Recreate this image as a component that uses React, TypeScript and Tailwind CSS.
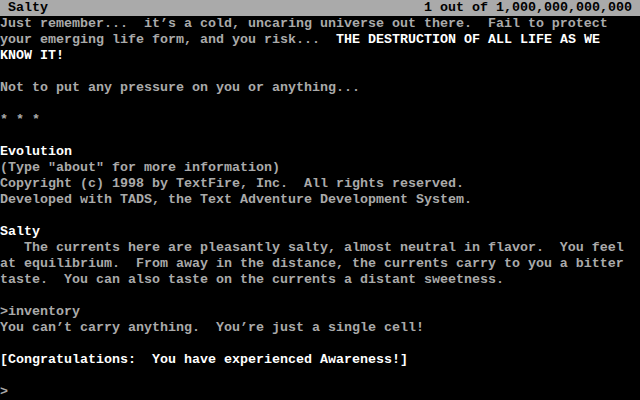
import React from "react";

type Seg = { t: string; w?: boolean };
const L = (...s: (string | Seg)[]) => s.map((x) => (typeof x === "string" ? { t: x } : x));

const lines: Seg[][] = [
  L("Just remember...  it\u2019s a cold, uncaring universe out there.  Fail to protect"),
  L("your emerging life form, and you risk...  ", { t: "THE DESTRUCTION OF ALL LIFE AS WE", w: true }),
  L({ t: "KNOW IT!", w: true }),
  L(""),
  L("Not to put any pressure on you or anything..."),
  L(""),
  L("* * *"),
  L(""),
  L({ t: "Evolution", w: true }),
  L("(Type \"about\" for more information)"),
  L("Copyright (c) 1998 by TextFire, Inc.  All rights reserved."),
  L("Developed with TADS, the Text Adventure Development System."),
  L(""),
  L({ t: "Salty", w: true }),
  L("   The currents here are pleasantly salty, almost neutral in flavor.  You feel"),
  L("at equilibrium.  From away in the distance, the currents carry to you a bitter"),
  L("taste.  You can also taste on the currents a distant sweetness."),
  L(""),
  L(">inventory"),
  L("You can\u2019t carry anything.  You\u2019re just a single cell!"),
  L(""),
  L({ t: "[Congratulations:  You have experienced Awareness!]", w: true }),
  L(""),
  L(">"),
];

export default function App() {
  return (
    <div
      className="w-[640px] h-[400px] bg-black text-[#aaaaaa] text-[13.333px] leading-[16px] font-bold overflow-hidden"
      style={{ fontFamily: '"Liberation Mono", "DejaVu Sans Mono", monospace' }}
    >
      <div className="h-4 bg-[#aaaaaa] text-black flex justify-between px-2 whitespace-pre">
        <span>Salty</span>
        <span>1 out of 1,000,000,000,000</span>
      </div>
      {lines.map((segs, i) => (
        <div key={i} className="h-4 whitespace-pre">
          {segs.map((s, j) => (
            <span key={j} className={s.w ? "text-white" : ""}>
              {s.t}
            </span>
          ))}
        </div>
      ))}
    </div>
  );
}
